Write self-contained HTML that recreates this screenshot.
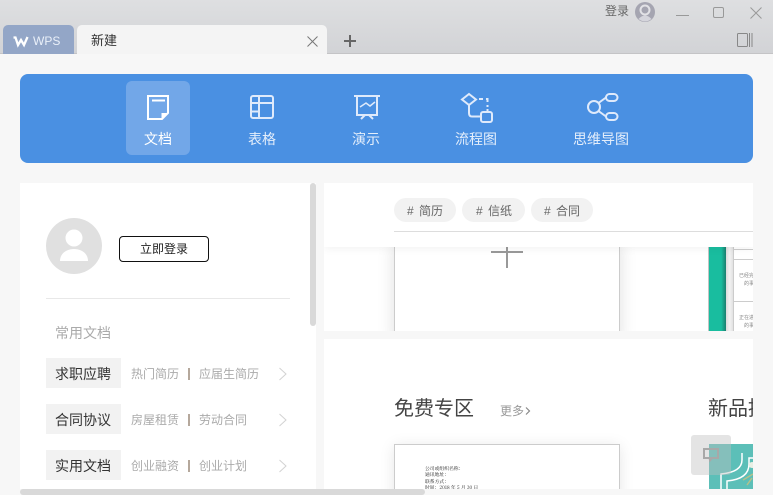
<!DOCTYPE html>
<html lang="zh"><head><meta charset="utf-8"><style>
html,body{margin:0;padding:0;width:773px;height:495px;overflow:hidden;background:#f7f7f7;font-family:"Liberation Sans","Noto Sans CJK SC",sans-serif}
.a{position:absolute}
.t{position:absolute;white-space:nowrap;line-height:1}
svg{position:absolute;overflow:visible}
</style></head><body>
<div class="a" style="left:0;top:0;width:773px;height:54px;background:linear-gradient(#dedfe1,#d2d3d6);border-bottom:1px solid #c4c4c6;box-sizing:border-box"></div>
<div class="a" style="left:3px;top:25px;width:71px;height:29px;background:#93a6c7;border-radius:5px 5px 0 0"></div>
<svg style="left:13px;top:36px" width="16" height="11" fill="none" stroke="#fff" stroke-width="2.300"><path d="M.5 1.500H2.500L5 9L8 4L11 9L14.500 1"/></svg>
<div class="t" style="left:33px;top:35px;font-size:12px;color:#eaf0f9">WPS</div>
<div class="a" style="left:77px;top:25px;width:250px;height:29px;background:#f4f4f4;border-radius:5px 5px 0 0"></div>
<div class="t" style="left:91px;top:34px;font-size:13px;color:#333">新建</div>
<svg style="left:307px;top:36px" width="11" height="11" stroke="#777" fill="none"><path d="M.5.5L10.500 10.500M10.500.5L.5 10.500"/></svg>
<svg style="left:344px;top:35px" width="12" height="12" stroke="#666" stroke-width="2" fill="none"><path d="M6 0V12M0 6H12"/></svg>
<div class="t" style="left:605px;top:5px;font-size:12px;color:#666">登录</div>
<svg style="left:635px;top:2px" width="20" height="20"><circle cx="10" cy="10" r="10" fill="#a5a5b1"/><path d="M3.500 17Q10 10 16.500 17Q10 22 3.500 17Z" fill="#d5d5dc"/><circle cx="10" cy="8" r="4.500" fill="#a5a5b1" stroke="#e2e2e6" stroke-width="2"/></svg>
<div class="a" style="left:676px;top:15px;width:13px;height:1px;background:#999"></div>
<div class="a" style="left:713px;top:7px;width:9px;height:9px;border:1px solid #999;border-radius:2px"></div>
<svg style="left:750px;top:7px" width="12" height="12" stroke="#999" fill="none"><path d="M.5.5L11.500 11.500M11.500.5L.5 11.500"/></svg>
<svg style="left:737px;top:33px" width="16" height="14" fill="none" stroke="#888"><rect x=".5" y=".5" width="10" height="13" rx="1"/><path d="M12.500 0V14M15 0V14"/></svg>

<div class="a" style="left:20px;top:74px;width:733px;height:89px;background:#4a90e2;border-radius:8px"></div>
<div class="a" style="left:126px;top:81px;width:64px;height:74px;background:#72a7e8;border-radius:6px"></div>
<svg style="left:147px;top:95px" width="22" height="25" fill="none" stroke="#fff" stroke-width="2"><path d="M1 1H21V18L15 24H1Z"/><path d="M5 5.500H18"/><path d="M21 18H14.500V24Z" fill="#fff" stroke="none"/></svg>
<div class="t" style="left:144px;top:132px;font-size:14px;color:#fff">文档</div>
<svg style="left:250px;top:95px" width="24" height="24" fill="none" stroke="#dfeafb" stroke-width="2"><rect x="1" y="1" width="22" height="22" rx="2"/><path d="M1 8H23M1 16.500H9M9 1V23"/></svg>
<div class="t" style="left:248px;top:132px;font-size:14px;color:#e4eefb">表格</div>
<svg style="left:353px;top:95px" width="27" height="25" fill="none" stroke="#dfeafb" stroke-width="2"><path d="M1 1H27M4 1V20H24V1M8 24L12 20M20 24L16 20"/><path d="M7 12L13 8L17 11L22 7" stroke-width="1.500"/></svg>
<div class="t" style="left:352px;top:132px;font-size:14px;color:#e4eefb">演示</div>
<svg style="left:460px;top:92px" width="34" height="31" fill="none" stroke="#dfeafb" stroke-width="2"><path d="M9 2L16 7.500L9 13L2 7.500Z"/><path d="M9 13V21Q9 24.500 12 24.500H21"/><rect x="21" y="20" width="11" height="10" rx="2"/><path d="M19 7H23M26 7H27.500V10M27.500 13V15M27.500 17V20"/></svg>
<div class="t" style="left:455px;top:132px;font-size:14px;color:#e4eefb">流程图</div>
<svg style="left:587px;top:92px" width="32" height="30" fill="none" stroke="#dfeafb" stroke-width="2"><circle cx="7" cy="15" r="6"/><rect x="19" y="2" width="11.500" height="7" rx="3.500"/><rect x="19" y="21" width="11.500" height="7" rx="3.500"/><path d="M11.500 11L19 5.500M11.500 19L19 24.500"/></svg>
<div class="t" style="left:573px;top:132px;font-size:14px;color:#e4eefb">思维导图</div>

<div class="a" style="left:20px;top:183px;width:296px;height:312px;background:#fff"></div>
<div class="a" style="left:310px;top:183px;width:6px;height:143px;background:#d9d9d9;border-radius:3px"></div>
<svg style="left:46px;top:218px" width="56" height="56"><circle cx="28" cy="28" r="28" fill="#e0e0e0"/><circle cx="28" cy="20" r="8.500" fill="#fff"/><path d="M14 43C14 27 42 27 42 43Z" fill="#fff"/></svg>
<div class="a" style="left:119px;top:236px;width:90px;height:26px;box-sizing:border-box;border:1px solid #111;border-radius:4px"></div>
<div class="t" style="left:140px;top:243px;font-size:12px;color:#222">立即登录</div>
<div class="a" style="left:46px;top:298px;width:244px;height:1px;background:#e8e8e8"></div>
<div class="t" style="left:55px;top:326px;font-size:14px;color:#aaa">常用文档</div>

<div class="a" style="left:46px;top:358px;width:75px;height:30px;background:#f2f2f2"></div>
<div class="a" style="left:46px;top:404px;width:75px;height:30px;background:#f2f2f2"></div>
<div class="a" style="left:46px;top:450px;width:75px;height:30px;background:#f2f2f2"></div>
<div class="t" style="left:55px;top:367px;font-size:14px;color:#333">求职应聘</div>
<div class="t" style="left:55px;top:413px;font-size:14px;color:#333">合同协议</div>
<div class="t" style="left:55px;top:459px;font-size:14px;color:#333">实用文档</div>
<div class="t" style="left:131px;top:368px;font-size:12px;color:#aaa">热门简历</div>
<div class="t" style="left:199px;top:368px;font-size:12px;color:#aaa">应届生简历</div>
<div class="t" style="left:131px;top:414px;font-size:12px;color:#aaa">房屋租赁</div>
<div class="t" style="left:199px;top:414px;font-size:12px;color:#aaa">劳动合同</div>
<div class="t" style="left:131px;top:460px;font-size:12px;color:#aaa">创业融资</div>
<div class="t" style="left:199px;top:460px;font-size:12px;color:#aaa">创业计划</div>
<div class="a" style="left:188px;top:368px;width:2px;height:12px;background:#b5a89c"></div>
<div class="a" style="left:188px;top:414px;width:2px;height:12px;background:#b5a89c"></div>
<div class="a" style="left:188px;top:460px;width:2px;height:12px;background:#b5a89c"></div>
<svg style="left:279px;top:367px" width="8" height="14" fill="none" stroke="#d2d2d2"><path d="M.5 1L7 7L.5 13"/></svg>
<svg style="left:279px;top:413px" width="8" height="14" fill="none" stroke="#d2d2d2"><path d="M.5 1L7 7L.5 13"/></svg>
<svg style="left:279px;top:459px" width="8" height="14" fill="none" stroke="#d2d2d2"><path d="M.5 1L7 7L.5 13"/></svg>

<div class="a" style="left:324px;top:183px;width:429px;height:148px;background:#fff;overflow:hidden">
  <div class="a" style="left:70px;top:60px;width:226px;height:100px;box-sizing:border-box;border:1px solid #ccc;background:#fff;box-shadow:0 0 16px rgba(0,0,0,.13)"></div>
  <div class="a" style="left:167px;top:68px;width:32px;height:2px;background:#999"></div>
  <div class="a" style="left:182px;top:60px;width:2px;height:25px;background:#999"></div>
  <div class="a" style="left:385px;top:60px;width:17px;height:90px;background:linear-gradient(90deg,#19bd9f 0 72%,#1b7f6f);box-shadow:-1px 0 0 #c4c4c4"></div>
  <div class="a" style="left:402px;top:60px;width:7px;height:90px;background:linear-gradient(90deg,#dcdcdc,#f2f2f2 50%,#e2e2e2)"></div>
  <div class="a" style="left:409px;top:60px;width:20px;height:90px;background:#fff;border-left:1px solid #ccc"></div>
  <div class="a" style="left:409px;top:66px;width:20px;height:1px;background:#ccc"></div>
  <div class="a" style="left:409px;top:76px;width:20px;height:1px;background:#ccc"></div>
  <div class="a" style="left:409px;top:118px;width:20px;height:1px;background:#ccc"></div>
  <div class="t" style="left:415px;top:91px;font-size:5px;color:#888">已经完</div>
  <div class="t" style="left:420px;top:99px;font-size:5px;color:#888">的事</div>
  <div class="t" style="left:415px;top:133px;font-size:5px;color:#888">正在进</div>
  <div class="t" style="left:420px;top:141px;font-size:5px;color:#888">的事</div>
  <div class="a" style="left:0;top:0;width:429px;height:64px;background:#fff;box-shadow:0 2px 8px rgba(0,0,0,.05)"></div>
  <div class="a" style="left:70px;top:48px;width:359px;height:1px;background:#ddd"></div>
  <div class="a" style="left:70px;top:15px;width:62px;height:24px;background:#f2f2f2;border-radius:12px"></div>
  <div class="a" style="left:138px;top:15px;width:63px;height:24px;background:#f2f2f2;border-radius:12px"></div>
  <div class="a" style="left:207px;top:15px;width:62px;height:24px;background:#f2f2f2;border-radius:12px"></div>
  <div class="t" style="left:83px;top:22px;font-size:12px;color:#666;word-spacing:2px"># 简历</div>
  <div class="t" style="left:152px;top:22px;font-size:12px;color:#666;word-spacing:2px"># 信纸</div>
  <div class="t" style="left:220px;top:22px;font-size:12px;color:#666;word-spacing:2px"># 合同</div>
</div>

<div class="a" style="left:324px;top:339px;width:429px;height:156px;background:#fff;overflow:hidden">
  <div class="t" style="left:70px;top:60px;font-size:20px;color:#444">免费专区</div>
  <div class="t" style="left:176px;top:66px;font-size:12px;color:#999">更多</div>
  <svg style="left:201px;top:68px" width="6" height="8" fill="none" stroke="#888" stroke-width="1.200"><path d="M1 .5L4.500 4L1 7.500"/></svg>
  <div class="t" style="left:384px;top:60px;font-size:20px;color:#444">新品推荐</div>
  <div class="a" style="left:70px;top:105px;width:226px;height:60px;box-sizing:border-box;border:1px solid #ccc;background:#fff;box-shadow:0 2px 14px rgba(0,0,0,.1)"></div>
  <div class="t" style="left:101px;top:127px;font-size:4.800px;color:#222;line-height:6.300px;font-family:'Noto Serif CJK SC',serif">公司或组织名称：<br>通讯地址：<br>联系方式：<br>时间：2018 年 5 月 30 日</div>
  <div class="a" style="left:385px;top:105px;width:44px;height:60px;background:#5cbfb8;overflow:hidden">
    <svg style="left:0;top:0" width="44" height="52" fill="none" stroke="#fff" stroke-width="1.500"><path d="M33 9V16Q33 28 12 30V51"/><path d="M44 14H40V20Q40 35 18 37V51"/><path d="M34 36L44 30M38 41L43 34" stroke="#b5c08a"/><circle cx="43" cy="21" r="3" fill="#e8efe4" stroke="none"/></svg>
  </div>
</div>
<div class="a" style="left:691px;top:435px;width:40px;height:40px;background:rgba(190,190,190,.42);border-radius:3px"></div>
<svg style="left:703px;top:447px" width="16" height="16" fill="none" stroke="#a8a8a8" stroke-width="2"><path d="M1 2H15V11H1Z"/><path d="M5.500 11H10.500L6.500 15.500Z" fill="#a8a8a8" stroke="none"/></svg>

<div class="a" style="left:0;top:489px;width:773px;height:6px;background:#f7f7f7"></div>
<div class="a" style="left:20px;top:489px;width:405px;height:6px;background:#d9d9d9;border-radius:3px"></div>
</body></html>
